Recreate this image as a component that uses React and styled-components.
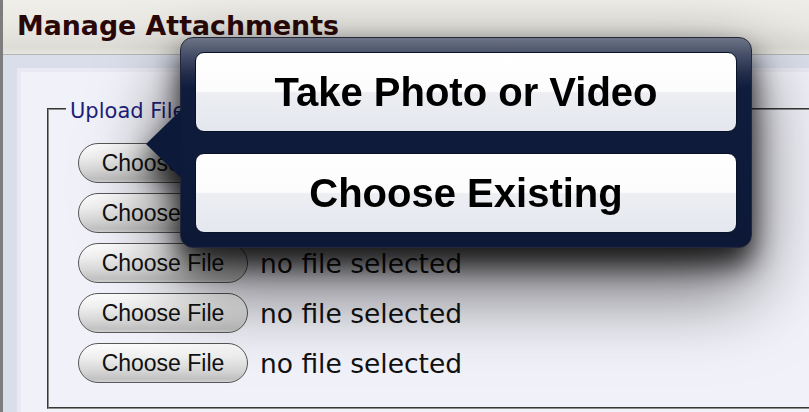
import styled, { createGlobalStyle } from 'styled-components'

const GlobalStyle = createGlobalStyle`
  html, body {
    margin: 0;
    padding: 0;
    background: #f1f1f9;
  }
  * {
    box-sizing: border-box;
  }
`

const Page = styled.div`
  position: relative;
  width: 809px;
  height: 412px;
  overflow: hidden;
  display: flex;
  flex-direction: column;
  border-left: 3px solid #7d7d7d;
  background: #f1f1f9;
`

const Header = styled.header`
  height: 55px;
  flex-shrink: 0;
  padding: 13px 0 0 14px;
  border-bottom: 1px solid #b6b6b2;
  background: linear-gradient(#efeee9 0%, #e9e8e3 45%, #dddcd6 88%, #e6e5e0 100%);
`

const Title = styled.h1`
  margin: 0;
  font-family: "DejaVu Sans", Verdana, sans-serif;
  font-weight: bold;
  font-size: 26.8px;
  line-height: 26.5px;
  color: #2a0808;
`

const Main = styled.div`
  flex: 1;
  padding: 13px 0 0 14px;
  background: #dadeea;
`

const Panel = styled.div`
  width: 1000px;
  height: 100%;
  padding-left: 26px;
  border: 4px solid #e9e9f3;
  border-right: none;
  border-bottom: none;
  background: #f1f1f9;
`

const Fieldset = styled.fieldset`
  width: 900px;
  margin: 22px 0 0 0;
  padding: 0 0 24px 0;
  border: 2px groove #8c8c8c;
  border-right: none;
`

const Legend = styled.legend`
  margin-left: 17px;
  padding: 5px 4px 0;
  line-height: 24px;
  font-family: "DejaVu Sans", Verdana, sans-serif;
  font-size: 21px;
  color: #1e1e7c;
`

const Rows = styled.div`
  display: flex;
  flex-direction: column;
  gap: 10px;
  margin-top: 20px;
  padding-left: 29px;
`

const Row = styled.div`
  display: flex;
  align-items: center;
  gap: 12px;
`

const FileButton = styled.button`
  width: 170px;
  height: 40px;
  padding: 0;
  border: 1.5px solid #575757;
  border-radius: 20px;
  background: linear-gradient(#fdfdfd 0%, #efefef 35%, #d6d6d6 70%, #c2c2c2 92%, #d0d0d0 100%);
  font-family: "Liberation Sans", Arial, sans-serif;
  font-size: 23px;
  color: #111;
`

const Status = styled.span`
  font-family: "DejaVu Sans", Verdana, sans-serif;
  font-size: 26.5px;
  color: #111;
`

const Popover = styled.div`
  position: absolute;
  left: 177px;
  top: 37px;
  width: 572px;
  height: 211px;
  padding: 14px;
  display: flex;
  flex-direction: column;
  gap: 21px;
  border: 1px solid #23283a;
  border-radius: 13px;
  background: linear-gradient(#6d7486 0%, #464f68 8%, #1f2a48 18%, #0f1c3c 24%, #0c1836 100%);
  filter: drop-shadow(0 16px 14px rgba(0, 0, 0, 0.8)) drop-shadow(0 28px 36px rgba(0, 0, 0, 0.6));

  &::before {
    content: '';
    position: absolute;
    left: -35px;
    top: 72px;
    width: 0;
    height: 0;
    border-top: 34px solid transparent;
    border-bottom: 34px solid transparent;
    border-right: 35px solid #0d1938;
  }
`

const SheetButton = styled.button`
  flex: 1;
  padding: 0;
  border: 1px solid #0a1228;
  border-radius: 9px;
  background: linear-gradient(#ffffff 0%, #fcfcfd 49%, #eceef2 51%, #e4e7ee 100%);
  font-family: "Liberation Sans", Arial, sans-serif;
  font-weight: bold;
  font-size: 40px;
  color: #000;
`

const files = [1, 2, 3, 4, 5]

export default function App() {
  return (
    <>
      <GlobalStyle />
      <Page>
        <Header>
          <Title>Manage Attachments</Title>
        </Header>
        <Main>
          <Panel>
            <Fieldset>
              <Legend>Upload Files</Legend>
              <Rows>
                {files.map((n) => (
                  <Row key={n}>
                    <FileButton>Choose File</FileButton>
                    <Status>no file selected</Status>
                  </Row>
                ))}
              </Rows>
            </Fieldset>
          </Panel>
        </Main>
        <Popover>
          <SheetButton>Take Photo or Video</SheetButton>
          <SheetButton>Choose Existing</SheetButton>
        </Popover>
      </Page>
    </>
  )
}
